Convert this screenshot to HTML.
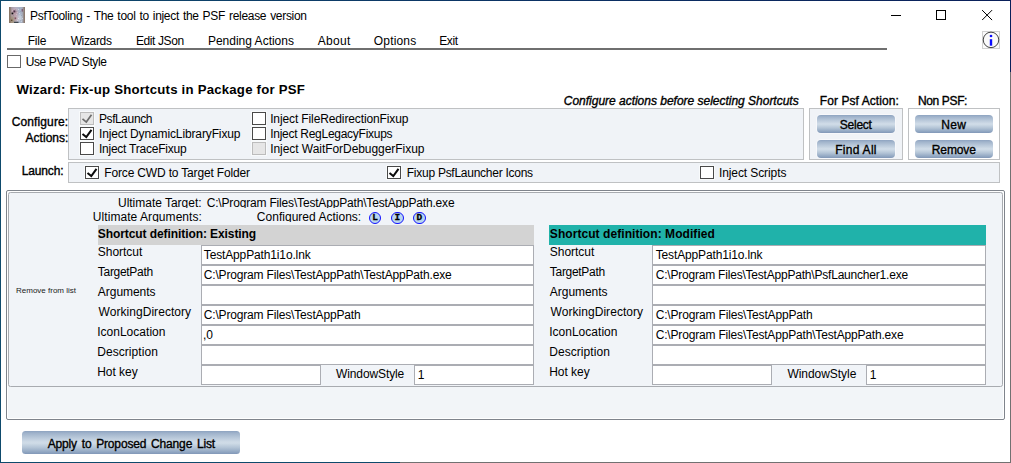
<!DOCTYPE html>
<html><head><meta charset="utf-8"><title>PsfTooling</title>
<style>
html,body{margin:0;padding:0;background:#fff;}
body{width:1011px;height:463px;position:relative;overflow:hidden;font-family:"Liberation Sans",sans-serif;color:#000;}
.a{position:absolute;box-sizing:border-box;}
.t{position:absolute;white-space:pre;line-height:16px;font-family:"Liberation Sans",sans-serif;}
.box{position:absolute;box-sizing:border-box;border:1px solid #bfc1c3;background:#f0f3f7;}
.cb{position:absolute;box-sizing:border-box;width:14px;height:13px;border:1px solid #494949;background:#fff;box-shadow:0 0 0 1px rgba(255,255,255,0.55);}
.cb.dis{border-color:#bcbcbc;background:#e6e6e6;}
.cb svg{position:absolute;left:-1px;top:-1px;width:14px;height:13px;}
.btn{position:absolute;box-sizing:border-box;border-radius:4px;background:linear-gradient(to bottom,#8da3c0 0%,#a0b3cb 10%,#b7c7d9 28%,#cfdbe7 48%,#cddae6 54%,#b3c4d6 72%,#8fa5c1 92%,#8197b7 100%);box-shadow:0 0 0 1px rgba(255,255,255,0.45);}
.tb{position:absolute;box-sizing:border-box;border:1px solid #abadb3;background:#fff;height:20px;}
.ci{position:absolute;box-sizing:border-box;width:12.4px;height:12.4px;border-radius:50%;border:1.4px solid #1414ff;background:#b9d6ef;}
.cit{position:absolute;font-family:"Liberation Mono",monospace;font-weight:bold;font-size:9.5px;line-height:10px;width:12px;text-align:center;-webkit-text-stroke:0.3px #000;}
</style></head><body>
<!-- window edges -->
<div class="a" style="left:0;top:0;width:1011px;height:1px;background:linear-gradient(to right,#0e4a6c,#0b2f63 60%,#0a205a);"></div>
<div class="a" style="left:0;top:0;width:1px;height:463px;background:#0e4a6c;"></div>
<div class="a" style="left:1010px;top:0;width:1px;height:72px;background:#0a205a;"></div>
<div class="a" style="left:1010px;top:72px;width:1px;height:391px;background:#717171;"></div>
<div class="a" style="left:0;top:462px;width:400px;height:1px;background:#0e4a6c;"></div>
<div class="a" style="left:400px;top:462px;width:611px;height:1px;background:#717171;"></div>

<!-- title icon -->
<svg class="a" style="left:9px;top:7px" width="16" height="16" viewBox="0 0 16 16">
<defs><filter id="bl" x="-20%" y="-20%" width="140%" height="140%"><feGaussianBlur stdDeviation="0.8"/></filter><filter id="bs" x="-40%" y="-40%" width="180%" height="180%"><feGaussianBlur stdDeviation="0.35"/></filter><clipPath id="ic"><rect width="16" height="16"/></clipPath></defs>
<rect width="16" height="16" fill="#8e7d70"/>
<g clip-path="url(#ic)"><g filter="url(#bl)">
<rect x="1.5" y="-2" width="13" height="20" fill="#a6a3b2"/>
<rect x="2.5" y="1" width="7" height="8.5" fill="#bc9faa"/>
<rect x="5" y="0" width="5" height="3" fill="#bdb6c6"/>
<rect x="8.5" y="-1" width="5.5" height="18" fill="#a7b3c7"/>
<rect x="9.5" y="8" width="3" height="6" fill="#cbd5e2"/>
<rect x="6" y="9" width="3.5" height="5" fill="#c8b2bd"/>
<rect x="1" y="9.5" width="4.5" height="8" fill="#a3937e"/>
</g><g filter="url(#bs)">
<rect x="4.4" y="3.4" width="2" height="2" fill="#4e3048"/>
<rect x="2.6" y="5.6" width="1.7" height="1.7" fill="#100a0e"/>
<rect x="5.6" y="10.4" width="1.6" height="1.8" fill="#84505e"/>
<rect x="12.6" y="2" width="1.4" height="2.6" fill="#80627a"/>
<rect x="5" y="14.8" width="4.5" height="2" fill="#3c4650"/>
<rect x="9" y="2" width="1" height="1" fill="#e8eef6" opacity="0.55"/><rect x="11" y="4" width="1" height="1" fill="#8c98ae" opacity="0.55"/><rect x="10" y="6" width="1" height="1" fill="#e4ecf4" opacity="0.55"/><rect x="12" y="8" width="1" height="1" fill="#8a96aa" opacity="0.55"/><rect x="9" y="11" width="1" height="1" fill="#eef2f8" opacity="0.55"/><rect x="11" y="13" width="1" height="1" fill="#909cb0" opacity="0.55"/><rect x="8" y="5" width="1" height="1" fill="#e0c8d0" opacity="0.55"/><rect x="6" y="2" width="1" height="1" fill="#a88c98" opacity="0.55"/><rect x="3" y="3" width="1" height="1" fill="#d8c0c8" opacity="0.55"/><rect x="7" y="7" width="1" height="1" fill="#e2ccd4" opacity="0.55"/><rect x="4" y="8" width="1" height="1" fill="#98808c" opacity="0.55"/><rect x="8" y="13" width="1" height="1" fill="#dfe6ee" opacity="0.55"/><rect x="13" y="11" width="1" height="1" fill="#e6ecf4" opacity="0.55"/><rect x="10" y="1" width="1" height="1" fill="#94a0b6" opacity="0.55"/><rect x="12" y="14" width="1" height="1" fill="#dde5ee" opacity="0.55"/><rect x="7" y="4" width="1" height="1" fill="#9c8492" opacity="0.55"/>
<rect x="2" y="12.6" width="1.4" height="1.4" fill="#5e4a30"/>
</g></g>
<rect x="0" y="0" width="1.5" height="16" fill="#8a7868"/>
<rect x="14.7" y="0" width="1.3" height="16" fill="#8c7a70"/>
</svg>

<!-- caption buttons -->
<div class="a" style="left:891px;top:15px;width:10px;height:1px;background:#000;"></div>
<div class="a" style="left:936px;top:10px;width:10px;height:10px;border:1px solid #000;"></div>
<svg class="a" style="left:982px;top:10px" width="11" height="11" viewBox="0 0 11 11"><path d="M0.1 0.1 L10.1 10.1 M10.1 0.1 L0.1 10.1" stroke="#000" stroke-width="1" fill="none"/></svg>

<!-- menu underline -->
<div class="a" style="left:7px;top:48px;width:880px;height:2px;background:#6f6f6f;"></div>

<!-- info icon -->
<div class="a" style="left:982px;top:31px;width:18px;height:18px;border:1px solid #d2d2d2;background:#fafafa;"></div>
<svg class="a" style="left:982px;top:31px" width="18" height="18" viewBox="0 0 18 18"><circle cx="9" cy="8.9" r="7.75" fill="none" stroke="#222" stroke-width="0.85"/><rect x="7.8" y="8.2" width="2.4" height="6.5" fill="#0a0aff"/><circle cx="9" cy="5" r="1.35" fill="#0a0aff"/></svg>

<!-- Use PVAD checkbox -->
<div class="cb" style="left:7px;top:55px;border-color:#686868;"></div>

<!-- configure box -->
<div class="box" style="left:68px;top:108px;width:736px;height:52px;"></div>
<div class="cb dis" style="left:80px;top:112px;"><svg viewBox="0 0 14 13"><path d="M2.5 6.9 L6.3 10.1 L11.5 2.8" stroke="#6d6d6d" stroke-width="1.7" fill="none"/></svg></div>
<div class="cb" style="left:80px;top:127px;"><svg viewBox="0 0 14 13"><path d="M2.5 6.9 L6.3 10.1 L11.5 2.8" stroke="#0c0c0c" stroke-width="2" fill="none"/></svg></div>
<div class="cb" style="left:80px;top:142px;"></div>
<div class="cb" style="left:252px;top:112px;"></div>
<div class="cb" style="left:252px;top:127px;"></div>
<div class="cb dis" style="left:252px;top:142px;"></div>

<!-- For Psf Action box -->
<div class="box" style="left:809px;top:108px;width:94px;height:52px;"></div>
<div class="btn" style="left:817px;top:115px;width:78px;height:18px;"></div>
<div class="btn" style="left:817px;top:140px;width:78px;height:18px;"></div>
<!-- Non PSF box -->
<div class="box" style="left:908px;top:108px;width:92px;height:52px;background:#fff;"></div>
<div class="btn" style="left:915px;top:115px;width:78px;height:18px;"></div>
<div class="btn" style="left:915px;top:140px;width:78px;height:18px;"></div>

<!-- launch box -->
<div class="box" style="left:68px;top:162px;width:932px;height:21px;"></div>
<div class="cb" style="left:85px;top:166px;"><svg viewBox="0 0 14 13"><path d="M2.5 6.9 L6.3 10.1 L11.5 2.8" stroke="#0c0c0c" stroke-width="2" fill="none"/></svg></div>
<div class="cb" style="left:387px;top:166px;"><svg viewBox="0 0 14 13"><path d="M2.5 6.9 L6.3 10.1 L11.5 2.8" stroke="#0c0c0c" stroke-width="2" fill="none"/></svg></div>
<div class="cb" style="left:700px;top:166px;"></div>

<!-- list -->
<div class="a" style="left:6px;top:190px;width:999px;height:230px;border:1px solid #7f848c;border-radius:2px;background:#f2f5f8;box-shadow:inset 0 0 0 1px #fff;"></div>
<div class="a" style="left:8px;top:192px;width:995px;height:195px;border:1px solid #a8abb0;border-radius:2.5px;background:#f1f4f8;"></div>

<div class="a" style="left:98px;top:225px;width:436px;height:20px;background:#d3d3d3;"></div>
<div class="a" style="left:549px;top:225px;width:437px;height:20px;background:#20b2aa;"></div>
<div class="tb" style="left:201px;top:245px;width:333px;"></div>
<div class="tb" style="left:652px;top:245px;width:334px;"></div>
<div class="tb" style="left:201px;top:265px;width:333px;"></div>
<div class="tb" style="left:652px;top:265px;width:334px;"></div>
<div class="tb" style="left:201px;top:285px;width:333px;"></div>
<div class="tb" style="left:652px;top:285px;width:334px;"></div>
<div class="tb" style="left:201px;top:305px;width:333px;"></div>
<div class="tb" style="left:652px;top:305px;width:334px;"></div>
<div class="tb" style="left:201px;top:325px;width:333px;"></div>
<div class="tb" style="left:652px;top:325px;width:334px;"></div>
<div class="tb" style="left:201px;top:345px;width:333px;"></div>
<div class="tb" style="left:652px;top:345px;width:334px;"></div>
<div class="tb" style="left:201px;top:365px;width:120px;"></div>
<div class="tb" style="left:414px;top:365px;width:120px;"></div>
<div class="tb" style="left:652px;top:365px;width:120px;"></div>
<div class="tb" style="left:866px;top:365px;width:120px;"></div>
<!-- action icons -->
<div class="ci" style="left:369px;top:211.6px;"></div><span class="cit" style="left:369.2px;top:212.6px;">L</span>
<div class="ci" style="left:391.2px;top:211.6px;"></div><span class="cit" style="left:391.4px;top:212.6px;">I</span>
<div class="ci" style="left:413.2px;top:211.6px;"></div><span class="cit" style="left:413.4px;top:212.6px;">D</span>

<!-- apply button -->
<div class="btn" style="left:22px;top:431px;width:218px;height:23px;border-radius:3.5px;"></div>

<span class="t" style="left:30.01px;top:7.84px;font-size:12px;letter-spacing:-0.303px;word-spacing:0.9px;">PsfTooling - The tool to inject the PSF release version</span>
<span class="t" style="left:27.78px;top:33.34px;font-size:12px;letter-spacing:-0.229px;">File</span>
<span class="t" style="left:70.63px;top:33.34px;font-size:12px;letter-spacing:-0.345px;">Wizards</span>
<span class="t" style="left:135.93px;top:33.34px;font-size:12px;letter-spacing:-0.387px;">Edit JSon</span>
<span class="t" style="left:207.93px;top:33.34px;font-size:12px;letter-spacing:-0.001px;">Pending Actions</span>
<span class="t" style="left:317.71px;top:33.34px;font-size:12px;letter-spacing:0.338px;">About</span>
<span class="t" style="left:373.86px;top:33.34px;font-size:12px;letter-spacing:0.153px;">Options</span>
<span class="t" style="left:439.16px;top:33.34px;font-size:12px;letter-spacing:-0.389px;">Exit</span>
<span class="t" style="left:25.78px;top:53.84px;font-size:12px;letter-spacing:-0.412px;">Use PVAD Style</span>
<span class="t" style="left:16.48px;top:81.63px;font-size:13.2px;letter-spacing:0.221px;font-weight:bold;">Wizard: Fix-up Shortcuts in Package for PSF</span>
<span class="t" style="left:563.79px;top:92.59px;font-size:12px;letter-spacing:-0.014px;font-style:italic;-webkit-text-stroke:0.36px #000;">Configure actions before selecting Shortcuts</span>
<span class="t" style="left:819.79px;top:93.04px;font-size:12px;letter-spacing:0.071px;-webkit-text-stroke:0.36px #000;">For Psf Action:</span>
<span class="t" style="left:917.93px;top:93.04px;font-size:12px;letter-spacing:-0.357px;-webkit-text-stroke:0.36px #000;">Non PSF:</span>
<span class="t" style="left:11.63px;top:113.59px;font-size:12px;letter-spacing:0.128px;-webkit-text-stroke:0.36px #000;">Configure:</span>
<span class="t" style="left:25.56px;top:130.34px;font-size:12px;letter-spacing:0.022px;-webkit-text-stroke:0.36px #000;">Actions:</span>
<span class="t" style="left:21.79px;top:162.54px;font-size:12px;letter-spacing:-0.160px;-webkit-text-stroke:0.36px #000;">Launch:</span>
<span class="t" style="left:98.93px;top:110.84px;font-size:12px;letter-spacing:-0.398px;">PsfLaunch</span>
<span class="t" style="left:98.93px;top:125.84px;font-size:12px;letter-spacing:-0.125px;">Inject DynamicLibraryFixup</span>
<span class="t" style="left:98.93px;top:140.84px;font-size:12px;letter-spacing:-0.232px;">Inject TraceFixup</span>
<span class="t" style="left:270.16px;top:110.84px;font-size:12px;letter-spacing:-0.118px;">Inject FileRedirectionFixup</span>
<span class="t" style="left:270.16px;top:125.84px;font-size:12px;letter-spacing:-0.269px;">Inject RegLegacyFixups</span>
<span class="t" style="left:270.16px;top:140.84px;font-size:12px;letter-spacing:-0.051px;">Inject WaitForDebuggerFixup</span>
<span class="t" style="left:104.32px;top:164.84px;font-size:12px;letter-spacing:-0.167px;">Force CWD to Target Folder</span>
<span class="t" style="left:406.78px;top:164.84px;font-size:12px;letter-spacing:-0.260px;">Fixup PsfLauncher Icons</span>
<span class="t" style="left:718.93px;top:164.84px;font-size:12px;letter-spacing:-0.091px;">Inject Scripts</span>
<span class="t" style="left:839.86px;top:116.84px;font-size:12px;letter-spacing:-0.275px;-webkit-text-stroke:0.36px #000;">Select</span>
<span class="t" style="left:835.24px;top:141.84px;font-size:12px;letter-spacing:0.272px;-webkit-text-stroke:0.36px #000;">Find All</span>
<span class="t" style="left:941.24px;top:116.84px;font-size:12px;letter-spacing:0.294px;-webkit-text-stroke:0.36px #000;">New</span>
<span class="t" style="left:931.78px;top:141.84px;font-size:12px;letter-spacing:-0.112px;-webkit-text-stroke:0.36px #000;">Remove</span>
<span class="t" style="left:47.71px;top:436.34px;font-size:12px;letter-spacing:-0.158px;-webkit-text-stroke:0.36px #000;word-spacing:1.6px;">Apply to Proposed Change List</span>
<span class="t" style="left:118.01px;top:194.84px;font-size:12px;letter-spacing:-0.017px;">Ultimate Target:</span>
<span class="t" style="left:206.71px;top:194.84px;font-size:12px;letter-spacing:-0.176px;">C:\Program Files\TestAppPath\TestAppPath.exe</span>
<span class="t" style="left:92.86px;top:208.84px;font-size:12px;letter-spacing:0.054px;">Ultimate Arguments:</span>
<span class="t" style="left:256.86px;top:208.84px;font-size:12px;letter-spacing:0.014px;">Configured Actions:</span>
<span class="t" style="left:97.86px;top:225.84px;font-size:12px;letter-spacing:-0.084px;font-weight:bold;">Shortcut definition: Existing</span>
<span class="t" style="left:549.86px;top:225.84px;font-size:12px;letter-spacing:0.060px;font-weight:bold;">Shortcut definition: Modified</span>
<span class="t" style="left:97.86px;top:244.14px;font-size:12px;letter-spacing:-0.047px;">Shortcut</span>
<span class="t" style="left:549.86px;top:244.14px;font-size:12px;letter-spacing:-0.047px;">Shortcut</span>
<span class="t" style="left:97.86px;top:264.14px;font-size:12px;letter-spacing:-0.311px;">TargetPath</span>
<span class="t" style="left:549.86px;top:264.14px;font-size:12px;letter-spacing:-0.311px;">TargetPath</span>
<span class="t" style="left:97.86px;top:284.14px;font-size:12px;letter-spacing:-0.051px;">Arguments</span>
<span class="t" style="left:549.86px;top:284.14px;font-size:12px;letter-spacing:-0.051px;">Arguments</span>
<span class="t" style="left:98.56px;top:304.14px;font-size:12px;letter-spacing:0.049px;">WorkingDirectory</span>
<span class="t" style="left:550.56px;top:304.14px;font-size:12px;letter-spacing:0.049px;">WorkingDirectory</span>
<span class="t" style="left:97.16px;top:324.14px;font-size:12px;letter-spacing:0.022px;">IconLocation</span>
<span class="t" style="left:549.16px;top:324.14px;font-size:12px;letter-spacing:0.022px;">IconLocation</span>
<span class="t" style="left:97.16px;top:344.14px;font-size:12px;letter-spacing:0.075px;">Description</span>
<span class="t" style="left:549.16px;top:344.14px;font-size:12px;letter-spacing:0.075px;">Description</span>
<span class="t" style="left:97.16px;top:364.14px;font-size:12px;letter-spacing:-0.012px;">Hot key</span>
<span class="t" style="left:549.16px;top:364.14px;font-size:12px;letter-spacing:-0.012px;">Hot key</span>
<span class="t" style="left:203.78px;top:246.59px;font-size:12px;letter-spacing:-0.139px;">TestAppPath1i1o.lnk</span>
<span class="t" style="left:655.71px;top:246.59px;font-size:12px;letter-spacing:-0.139px;">TestAppPath1i1o.lnk</span>
<span class="t" style="left:203.78px;top:266.59px;font-size:12px;letter-spacing:-0.176px;">C:\Program Files\TestAppPath\TestAppPath.exe</span>
<span class="t" style="left:655.71px;top:266.59px;font-size:12px;letter-spacing:-0.206px;">C:\Program Files\TestAppPath\PsfLauncher1.exe</span>
<span class="t" style="left:203.78px;top:306.59px;font-size:12px;letter-spacing:-0.167px;">C:\Program Files\TestAppPath</span>
<span class="t" style="left:655.71px;top:306.59px;font-size:12px;letter-spacing:-0.167px;">C:\Program Files\TestAppPath</span>
<span class="t" style="left:203.08px;top:326.59px;font-size:12px;letter-spacing:-0.284px;">,0</span>
<span class="t" style="left:655.71px;top:326.59px;font-size:12px;letter-spacing:-0.176px;">C:\Program Files\TestAppPath\TestAppPath.exe</span>
<span class="t" style="left:336.02px;top:366.24px;font-size:12px;letter-spacing:-0.111px;">WindowStyle</span>
<span class="t" style="left:787.40px;top:366.24px;font-size:12px;letter-spacing:-0.041px;">WindowStyle</span>
<span class="t" style="left:417.86px;top:366.59px;font-size:12px;letter-spacing:-0.189px;">1</span>
<span class="t" style="left:869.79px;top:366.59px;font-size:12px;letter-spacing:-0.189px;">1</span>
<span class="t" style="left:16.01px;top:282.73px;font-size:8px;letter-spacing:0.002px;color:#1a1a1a;">Remove from list</span>
<div class="a" style="left:90px;top:208px;width:380px;height:3px;background:#f1f4f8;"></div>
<div class="a" style="left:90px;top:222px;width:275px;height:3px;background:#f1f4f8;"></div>
</body></html>
